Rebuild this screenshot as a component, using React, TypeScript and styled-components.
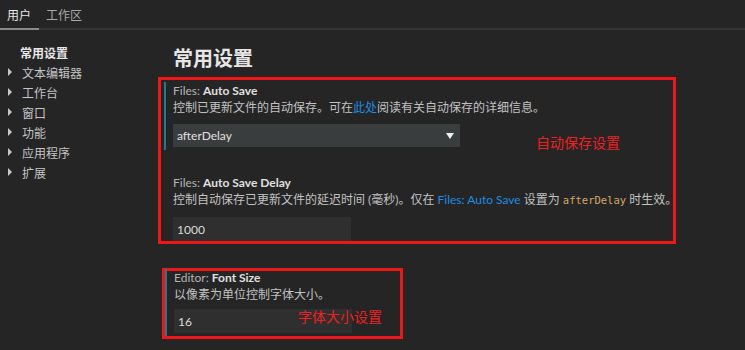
import React from "react";
import styled, { createGlobalStyle } from "styled-components";

const GlobalStyle = createGlobalStyle`
  html, body {
    margin: 0;
    padding: 0;
    background: #252526;
  }
  body {
    font-family: Lato, "Noto Sans CJK SC", sans-serif;
    color: #cccccc;
  }
`;

const Page = styled.div`
  width: 745px;
  height: 350px;
  overflow: hidden;
  background: #252526;
`;

const TabBar = styled.div`
  display: flex;
  height: 28px;
  border-bottom: 2px solid #333435;
`;

const Tab = styled.div<{ active?: boolean }>`
  display: flex;
  align-items: center;
  padding: 0 7px 2px;
  margin-bottom: -2px;
  font-size: 12px;
  color: ${(p) => (p.active ? "#e8e8e8" : "#a8a8a8")};
  box-shadow: ${(p) => (p.active ? "inset 0 -2px 0 0 #8a8a8a" : "none")};
  &:first-child {
    padding-right: 8px;
  }
`;

const Body = styled.div`
  display: grid;
  grid-template-columns: 158px 1fr;
`;

const Sidebar = styled.div`
  padding-top: 12px;
  display: flex;
  flex-direction: column;
`;

const NavItem = styled.div<{ bold?: boolean }>`
  display: flex;
  align-items: center;
  height: 20px;
  padding-left: ${(p) => (p.bold ? "20px" : "6px")};
  font-size: 12px;
  font-weight: ${(p) => (p.bold ? 700 : 400)};
  color: ${(p) => (p.bold ? "#e8e8e8" : "#c4c4c4")};
`;

const Arrow = styled.span`
  width: 0;
  height: 0;
  border-top: 4px solid transparent;
  border-bottom: 4px solid transparent;
  border-left: 4px solid #c8c8c8;
  margin: 0 10px 0 2px;
`;

const Content = styled.div`
  display: flex;
  flex-direction: column;
  padding-top: 14px;
`;

const Heading = styled.h1`
  margin: 0 0 0 15px;
  height: 33px;
  font-size: 20px;
  font-weight: 700;
  line-height: 28px;
  color: #e6e6e6;
`;

const RedBox = styled.div<{ w: number; offset: number; top: number }>`
  position: relative;
  width: ${(p) => p.w}px;
  margin-left: ${(p) => p.offset}px;
  margin-top: ${(p) => p.top}px;
  border: 3px solid #f01616;
  box-sizing: border-box;
  display: flex;
  flex-direction: column;
`;

const Note = styled.span<{ left: number; top: number }>`
  position: absolute;
  left: ${(p) => p.left}px;
  top: ${(p) => p.top}px;
  font-size: 14px;
  color: #f02020;
  font-family: "Noto Sans CJK SC", sans-serif;
`;

const Item = styled.div<{ focused?: boolean; indent: number; gap: number; pb: number }>`
  margin-top: ${(p) => p.gap}px;
  margin-left: ${(p) => p.indent}px;
  padding-left: 7px;
  padding-bottom: ${(p) => p.pb}px;
  border-left: 2px solid ${(p) => (p.focused ? "#177e95" : "transparent")};
`;

const Title = styled.div`
  font-size: 12px;
  line-height: 17px;
  color: #b4b4b4;
  b {
    color: #e0e0e0;
    font-weight: 700;
  }
`;

const Desc = styled.div`
  font-size: 12px;
  line-height: 17px;
  color: #c2c2c2;
  white-space: nowrap;
`;

const Link = styled.span`
  color: #1c8fe0;
`;

const Code = styled.span`
  font-family: "DejaVu Sans Mono", monospace;
  font-size: 10.5px;
  color: #d5a86b;
`;

const Select = styled.div`
  margin-top: 8px;
  width: 287px;
  height: 23px;
  background: #3a3d3d;
  display: flex;
  align-items: center;
  justify-content: space-between;
  padding: 0 6px 0 4px;
  box-sizing: border-box;
  font-size: 12px;
  color: #e0e0e0;
`;

const Caret = styled.span`
  width: 0;
  height: 0;
  border-left: 4px solid transparent;
  border-right: 4px solid transparent;
  border-top: 6px solid #f0f0f0;
`;

const Input = styled.div<{ gap: number }>`
  margin-top: ${(p) => p.gap}px;
  width: 178px;
  height: 24px;
  background: #2f2f2f;
  display: flex;
  align-items: center;
  padding-left: 4px;
  box-sizing: border-box;
  font-size: 12px;
  color: #dcdcdc;
`;

const nav = ["文本编辑器", "工作台", "窗口", "功能", "应用程序", "扩展"];

export default function App() {
  return (
    <Page>
      <GlobalStyle />
      <TabBar>
        <Tab active>用户</Tab>
        <Tab>工作区</Tab>
      </TabBar>
      <Body>
        <Sidebar>
          <NavItem bold>常用设置</NavItem>
          {nav.map((n) => (
            <NavItem key={n}>
              <Arrow />
              {n}
            </NavItem>
          ))}
        </Sidebar>
        <Content>
          <Heading>常用设置</Heading>
          <RedBox w={518} offset={0} top={0}>
            <Note left={375} top={52}>自动保存设置</Note>
            <Item focused indent={3} gap={2} pb={3}>
              <Title>
                Files: <b>Auto Save</b>
              </Title>
              <Desc>
                控制已更新文件的自动保存。可在<Link>此处</Link>阅读有关自动保存的详细信息。
              </Desc>
              <Select>
                afterDelay
                <Caret />
              </Select>
            </Item>
            <Item indent={3} gap={24} pb={0}>
              <Title>
                Files: <b>Auto Save Delay</b>
              </Title>
              <Desc>
                控制自动保存已更新文件的延迟时间 (毫秒)。仅在 <Link>Files: Auto Save</Link> 设置为{" "}
                <Code>afterDelay</Code> 时生效。
              </Desc>
              <Input gap={8}>1000</Input>
            </Item>
          </RedBox>
          <RedBox w={241} offset={4} top={24}>
            <Note left={133} top={35}>字体大小设置</Note>
            <Item focused indent={0} gap={-2} pb={3}>
              <Title>
                Editor: <b>Font Size</b>
              </Title>
              <Desc>以像素为单位控制字体大小。</Desc>
              <Input gap={6}>16</Input>
            </Item>
          </RedBox>
        </Content>
      </Body>
    </Page>
  );
}
